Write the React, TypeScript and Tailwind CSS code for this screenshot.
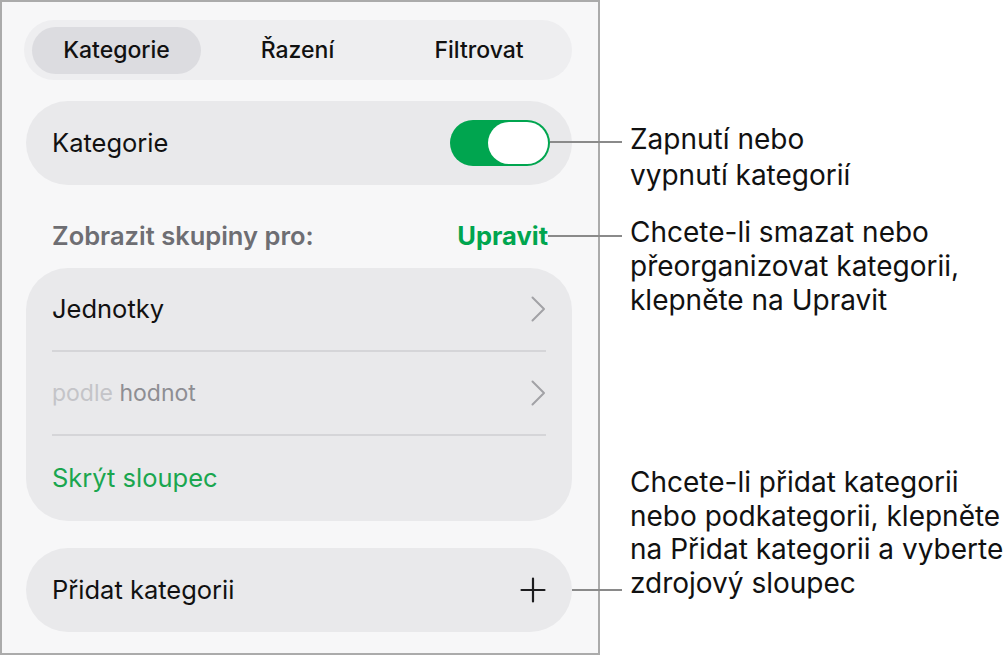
import React from "react";

const Chevron = () => (
  <svg width="16" height="26" viewBox="0 0 16 26" fill="none">
    <path d="M2.5 1.5 L14 13 L2.5 24.5" stroke="#a2a2a6" strokeWidth="2" strokeLinecap="round" strokeLinejoin="round" />
  </svg>
);

const Plus = () => (
  <svg width="26" height="26" viewBox="0 0 26 26" fill="none">
    <path d="M13 1.5 V24.5 M1.5 13 H24.5" stroke="#1c1c1e" strokeWidth="2.2" strokeLinecap="round" />
  </svg>
);

export default function App() {
  return (
    <div
      className="relative w-[1008px] h-[657px] bg-white overflow-hidden"
      style={{ fontFamily: "Inter, 'Noto Sans', sans-serif" }}
    >
      {/* Panel */}
      <div className="w-[600px] h-[655px] border-2 border-[#ababab] bg-[#f7f7f8] flex flex-col pl-[22px] pr-[26px] pt-[18px]">
        {/* Segmented control */}
        <div className="h-[60px] w-[548px] rounded-full bg-[#eeeef0] flex items-center px-[8px] text-[23px] font-medium text-[#111]">
          <div className="w-[169px] h-[47px] rounded-full bg-[#dcdce0] flex items-center justify-center">
            Kategorie
          </div>
          <div className="w-[193px] h-[47px] flex items-center justify-center">Řazení</div>
          <div className="flex-1 h-[47px] flex items-center justify-center">Filtrovat</div>
        </div>

        {/* Toggle row */}
        <div className="mt-[21px] ml-[2px] w-[546px] h-[84px] rounded-full bg-[#e9e9eb] flex items-center justify-between pl-[26px] pr-[22px]">
          <span className="text-[25.5px] text-[#111]">Kategorie</span>
          <div className="w-[100px] h-[46px] rounded-full bg-[#00a54f] p-[2px] flex justify-end">
            <div className="w-[60px] h-[42px] rounded-full bg-white" />
          </div>
        </div>

        {/* Header */}
        <div className="mt-[34px] ml-[28px] w-[496px] h-[34px] flex items-center justify-between">
          <span className="text-[25.5px] font-semibold text-[#6e6e73]">Zobrazit skupiny pro:</span>
          <span className="text-[25.5px] font-bold text-[#00a54f]">Upravit</span>
        </div>

        {/* Group card */}
        <div className="mt-[15px] ml-[2px] w-[546px] h-[253px] rounded-[42px] bg-[#e9e9eb] flex flex-col px-[26px]">
          <div className="h-[84px] flex items-center justify-between border-b-2 border-[#d5d5d8]">
            <span className="text-[25.5px] text-[#111]">Jednotky</span>
            <Chevron />
          </div>
          <div className="h-[84px] flex items-center justify-between border-b-2 border-[#d5d5d8]">
            <span className="text-[23px]">
              <span className="text-[#c4c4c8]">podle</span>{" "}
              <span className="text-[#8e8e93]">hodnot</span>
            </span>
            <Chevron />
          </div>
          <div className="flex-1 flex items-center">
            <span className="text-[25.5px] text-[#1aa64f]">Skrýt sloupec</span>
          </div>
        </div>

        {/* Add category */}
        <div className="mt-[27px] ml-[2px] w-[546px] h-[84px] rounded-full bg-[#e9e9eb] flex items-center justify-between pl-[26px] pr-[26px]">
          <span className="text-[25.5px] text-[#111]">Přidat kategorii</span>
          <Plus />
        </div>
      </div>

      {/* Leader lines */}
      <div className="absolute left-[550px] top-[141px] w-[72px] h-[2px] bg-[#8a8a8a]" />
      <div className="absolute left-[548px] top-[235px] w-[74px] h-[2px] bg-[#8a8a8a]" />
      <div className="absolute left-[572px] top-[589px] w-[50px] h-[2px] bg-[#8a8a8a]" />

      {/* Callouts */}
      <div className="absolute left-[630px] top-[121px] text-[28px] leading-[36px] text-[#111] whitespace-nowrap">
        Zapnutí nebo
        <br />
        vypnutí kategorií
      </div>
      <div className="absolute left-[630px] top-[215px] text-[28px] leading-[34px] text-[#111] whitespace-nowrap">
        Chcete-li smazat nebo
        <br />
        přeorganizovat kategorii,
        <br />
        klepněte na Upravit
      </div>
      <div className="absolute left-[630px] top-[466px] text-[28px] leading-[33.5px] text-[#111] whitespace-nowrap">
        Chcete-li přidat kategorii
        <br />
        nebo podkategorii, klepněte
        <br />
        na Přidat kategorii a vyberte
        <br />
        zdrojový sloupec
      </div>
    </div>
  );
}
